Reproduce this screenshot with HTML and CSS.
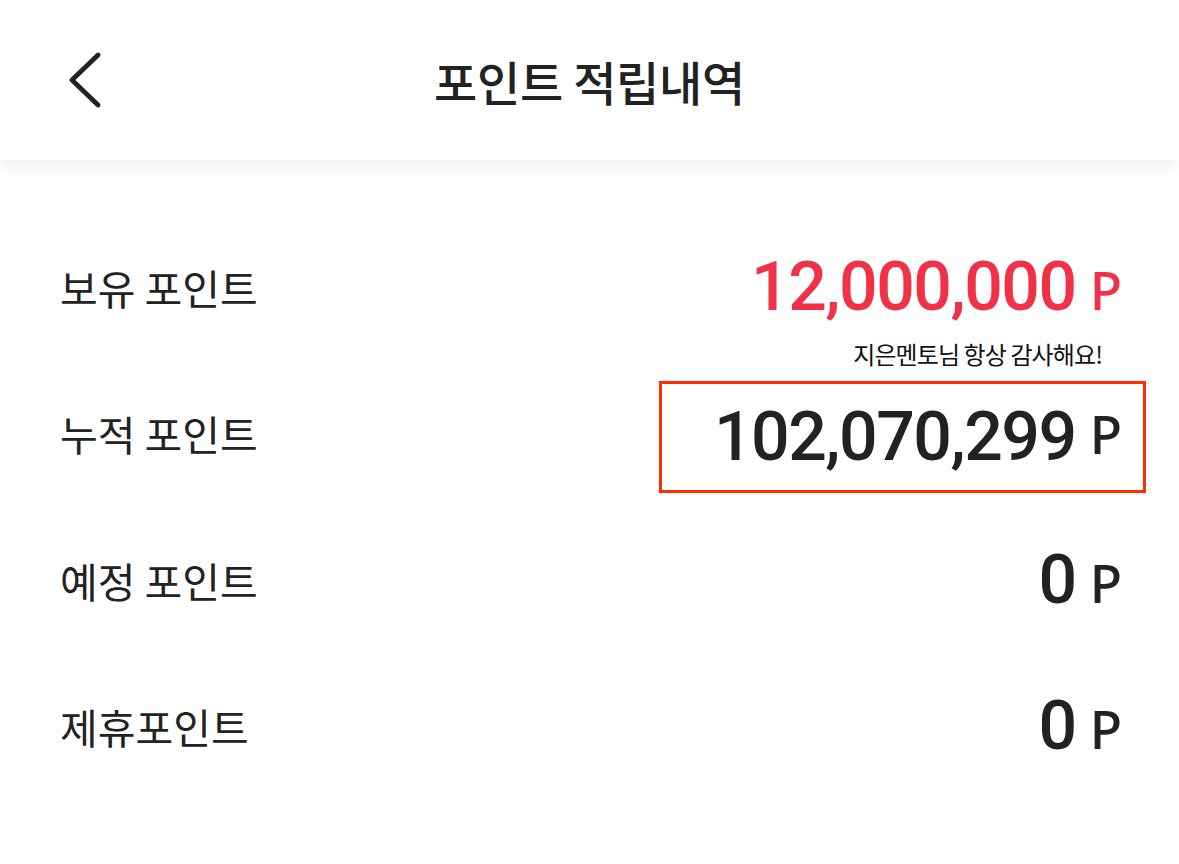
FILE: index.html
```html
<!DOCTYPE html>
<html>
  <head>
    <meta charset="utf-8">
    <title>포인트 적립내역</title>
    <link rel="stylesheet" href="styles.css">
  </head>
  <body>
    <div id="principal">
      <div class="topo">
        <a class="voltar">
          <svg width="40" height="56" viewBox="0 0 40 56">
            <polyline points="30,3 4,28 30,53" fill="none" stroke="#222" stroke-width="4.8" stroke-linecap="round" stroke-linejoin="round"/>
          </svg>
        </a>
        <h1 class="titulo">포인트 적립내역</h1>
      </div>

      <div class="lista">
        <div class="linha linha-1">
          <span class="rotulo">보유 포인트</span>
          <span class="valor vermelho">12,000,000<small>P</small></span>
        </div>
        <div class="obrigado">지은멘토님 항상 감사해요!</div>
        <div class="linha linha-2">
          <span class="rotulo">누적 포인트</span>
          <span class="valor destaque">102,070,299<small>P</small></span>
        </div>
        <div class="linha">
          <span class="rotulo">예정 포인트</span>
          <span class="valor">0<small>P</small></span>
        </div>
        <div class="linha">
          <span class="rotulo">제휴포인트</span>
          <span class="valor">0<small>P</small></span>
        </div>
      </div>
    </div>
  </body>
</html>
```

FILE: styles.css
```css
*{
  box-sizing: border-box;
}

body{
  margin: 0;
  background: #fff;
  color: #222;
  font-family: "Noto Sans CJK KR", "Noto Sans", sans-serif;
}

#principal{
  width: 1179px;
  min-height: 864px;
  overflow: hidden;
}

.topo{
  position: relative;
  height: 160px;
  display: flex;
  align-items: center;
  justify-content: center;
  background: #fff;
  box-shadow: 0 6px 18px rgba(0, 0, 0, 0.07);
}

.voltar{
  position: absolute;
  left: 68px;
  top: 52px;
  display: block;
  line-height: 0;
}

.titulo{
  margin: 0;
  font-size: 47px;
  font-weight: 500;
  letter-spacing: -0.3px;
  color: #222;
}

.lista{
  padding: 77px 57px 0 60px;
}

.linha{
  display: flex;
  align-items: center;
  justify-content: space-between;
  height: 146px;
}

.linha-1{
  height: 100px;
}

.linha-2{
  height: 124px;
  margin-bottom: 12px;
}

.rotulo{
  font-size: 41px;
  color: #222;
}

.valor{
  display: flex;
  align-items: baseline;
  font-family: Roboto, "Liberation Sans", sans-serif;
  font-weight: 500;
  font-size: 68px;
  letter-spacing: -1.5px;
  color: #222;
}

.valor small{
  margin-left: 14px;
  font-family: "Noto Sans", Roboto, sans-serif;
  font-size: 53px;
  font-weight: 500;
  letter-spacing: 0;
}

.vermelho{
  color: #f03147;
}

.obrigado{
  text-align: right;
  font-size: 24px;
  line-height: 34px;
  letter-spacing: -0.9px;
  margin-right: 20px;
  color: #111;
}

.destaque{
  width: 487px;
  height: 112px;
  margin-right: -24px;
  margin-top: 8px;
  padding: 0 21px 0 0;
  justify-content: flex-end;
  align-items: center;
  border: 3px solid #ff2d00;
}

.destaque small{
  align-self: flex-end;
  margin-bottom: 20px;
}
```
